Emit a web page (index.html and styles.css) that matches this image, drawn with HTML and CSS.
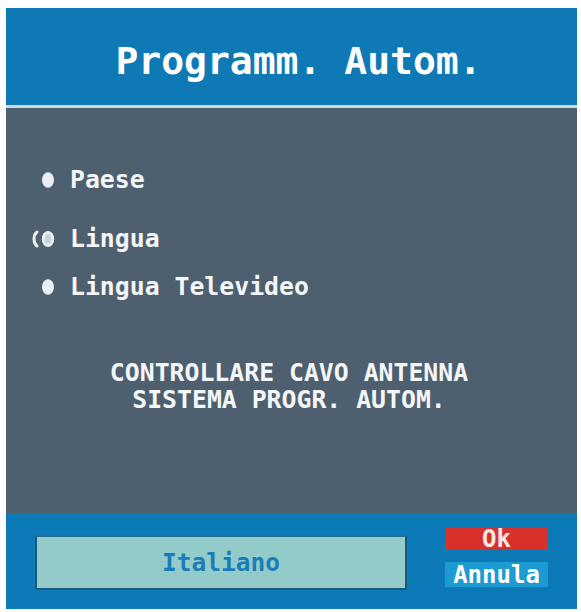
FILE: index.html
```html
<!DOCTYPE html>
<html>
<head>
<meta charset="utf-8">
<link rel="stylesheet" href="styles.css">
</head>
<body>
<div class="panel">
  <div class="header">Programm. Autom.</div>
  <div class="content">
    <div class="item item-paese">
      <svg class="bullet" width="32" height="20" viewBox="0 0 32 20"><ellipse cx="24" cy="10" rx="6" ry="7.8" fill="#e9eef2"/></svg>
      <span>Paese</span>
    </div>
    <div class="item item-lingua">
      <svg class="bullet" width="32" height="20" viewBox="0 0 32 20"><path d="M13 3 C9 6 9 14 13 17" stroke="#e9eef2" stroke-width="3" fill="none" stroke-linecap="round"/><ellipse cx="24" cy="10" rx="6.2" ry="8" fill="#e9eef2"/><ellipse cx="24" cy="10" rx="3.4" ry="5" fill="#c9d3da"/></svg>
      <span>Lingua</span>
    </div>
    <div class="item item-tv">
      <svg class="bullet" width="32" height="20" viewBox="0 0 32 20"><ellipse cx="24" cy="10" rx="6" ry="7.8" fill="#e9eef2"/></svg>
      <span>Lingua Televideo</span>
    </div>
    <div class="message">CONTROLLARE CAVO ANTENNA<br>SISTEMA PROGR. AUTOM.</div>
  </div>
  <div class="footer">
    <div class="valuebox">Italiano</div>
    <div class="buttons">
      <div class="btn btn-ok">Ok</div>
      <div class="btn btn-cancel">Annula</div>
    </div>
  </div>
</div>
</body>
</html>
```
FILE: styles.css
```css
html, body {
  margin: 0;
  padding: 0;
  background: #ffffff;
}
body {
  font-family: "DejaVu Sans Mono", "Liberation Mono", monospace;
}
.panel {
  margin: 8px 0 0 6px;
  width: 571px;
  height: 601px;
  display: flex;
  flex-direction: column;
}
.header {
  height: 100px;
  box-sizing: border-box;
  background: #0e79b5;
  border-bottom: 3px solid #c8dde8;
  color: #ffffff;
  font-weight: bold;
  font-size: 38px;
  display: flex;
  align-items: center;
  justify-content: center;
  padding-top: 9px;
  padding-left: 14px;
}
.content {
  height: 405px;
  background: #4e6070;
  display: flex;
  flex-direction: column;
  color: #f4f6f8;
  font-weight: bold;
  font-size: 24.8px;
}
.item {
  display: flex;
  align-items: center;
  height: 30px;
  line-height: 30px;
  padding-left: 18px;
}
.bullet {
  width: 32px;
  height: 20px;
  margin-right: 14px;
  flex: none;
}
.item-paese { margin-top: 57px; }
.item-lingua { margin-top: 29px; }
.item-tv { margin-top: 18px; }
.message {
  margin-top: 57px;
  text-align: center;
  line-height: 27px;
  padding-right: 5px;
}
.footer {
  flex: 1;
  background: #0b7ab6;
  display: flex;
  padding-left: 29px;
}
.valuebox {
  width: 372px;
  height: 55px;
  margin-top: 22px;
  box-sizing: border-box;
  background: #93cbcb;
  border: 2px solid #1b5a76;
  border-top-color: #2a6b88;
  color: #1b7db8;
  font-size: 24.5px;
  font-weight: bold;
  display: flex;
  align-items: center;
  justify-content: center;
}
.buttons {
  margin-left: 38px;
  width: 103px;
  display: flex;
  flex-direction: column;
}
.btn {
  display: flex;
  align-items: center;
  justify-content: center;
  font-weight: bold;
  font-size: 24px;
}
.btn-ok {
  margin-top: 14px;
  height: 23px;
  background: #d8302b;
  color: #fbe8e4;
}
.btn-cancel {
  margin-top: 12px;
  height: 25px;
  background: #1b9bd1;
  color: #ffffff;
}
```
